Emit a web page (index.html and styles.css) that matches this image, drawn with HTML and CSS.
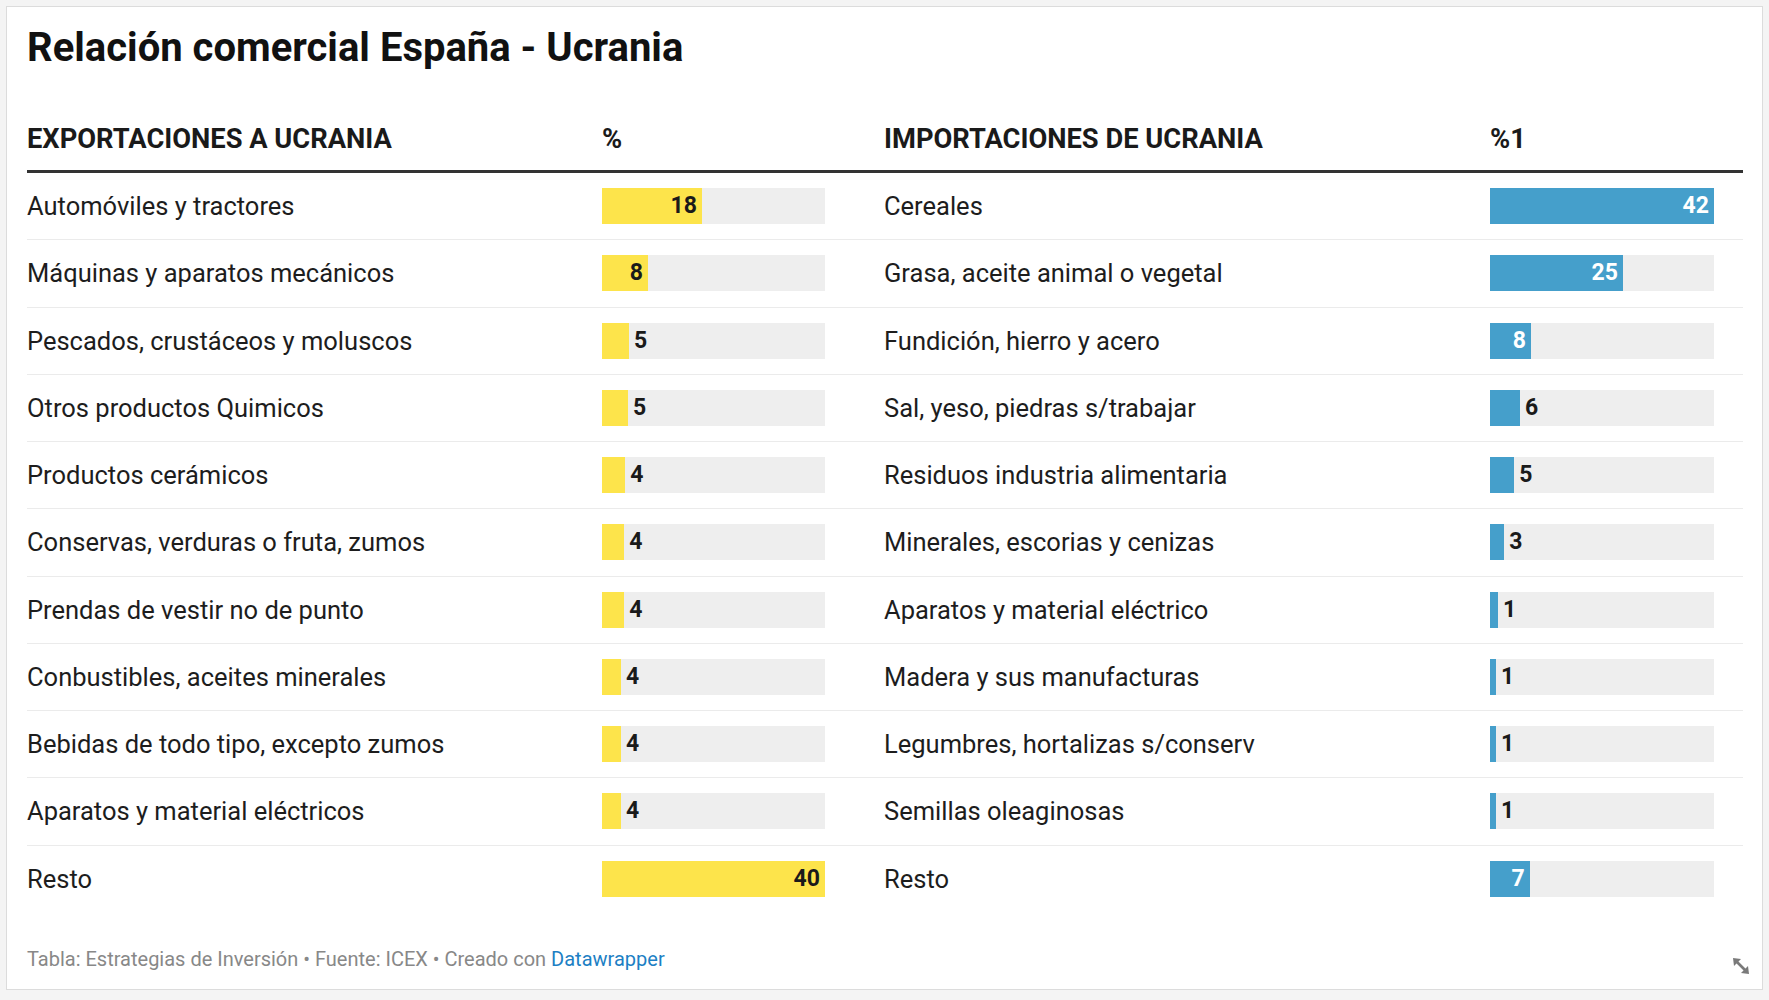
FILE: index.html
```html
<!DOCTYPE html>
<html lang="es">
<head>
<meta charset="utf-8">
<title>Relación comercial España - Ucrania</title>
<link rel="stylesheet" href="styles.css">
</head>
<body>
<div class="card">
  <h1 class="title">Relación comercial España - Ucrania</h1>
  <div class="table">
    <div class="th">EXPORTACIONES A UCRANIA</div>
    <div class="th">%</div>
    <div class="th">IMPORTACIONES DE UCRANIA</div>
    <div class="th">%1</div>

    <div class="td label">Automóviles y tractores</div>
    <div class="td bar"><div class="track"><div class="fill y in" style="width:100px"><span class="val">18</span></div></div></div>
    <div class="td label">Cereales</div>
    <div class="td bar"><div class="track r"><div class="fill b in" style="width:224px"><span class="val w">42</span></div></div></div>

    <div class="td label">Máquinas y aparatos mecánicos</div>
    <div class="td bar"><div class="track"><div class="fill y in" style="width:46px"><span class="val">8</span></div></div></div>
    <div class="td label">Grasa, aceite animal o vegetal</div>
    <div class="td bar"><div class="track r"><div class="fill b in" style="width:133px"><span class="val w">25</span></div></div></div>

    <div class="td label">Pescados, crustáceos y moluscos</div>
    <div class="td bar"><div class="track"><div class="fill y" style="width:27px"></div><span class="val out">5</span></div></div>
    <div class="td label">Fundición, hierro y acero</div>
    <div class="td bar"><div class="track r"><div class="fill b in" style="width:41px"><span class="val w">8</span></div></div></div>

    <div class="td label">Otros productos Quimicos</div>
    <div class="td bar"><div class="track"><div class="fill y" style="width:26px"></div><span class="val out">5</span></div></div>
    <div class="td label">Sal, yeso, piedras s/trabajar</div>
    <div class="td bar"><div class="track r"><div class="fill b" style="width:30px"></div><span class="val out">6</span></div></div>

    <div class="td label">Productos cerámicos</div>
    <div class="td bar"><div class="track"><div class="fill y" style="width:23.3px"></div><span class="val out">4</span></div></div>
    <div class="td label">Residuos industria alimentaria</div>
    <div class="td bar"><div class="track r"><div class="fill b" style="width:24.3px"></div><span class="val out">5</span></div></div>

    <div class="td label">Conservas, verduras o fruta, zumos</div>
    <div class="td bar"><div class="track"><div class="fill y" style="width:22.3px"></div><span class="val out">4</span></div></div>
    <div class="td label">Minerales, escorias y cenizas</div>
    <div class="td bar"><div class="track r"><div class="fill b" style="width:14.3px"></div><span class="val out">3</span></div></div>

    <div class="td label">Prendas de vestir no de punto</div>
    <div class="td bar"><div class="track"><div class="fill y" style="width:22.3px"></div><span class="val out">4</span></div></div>
    <div class="td label">Aparatos y material eléctrico</div>
    <div class="td bar"><div class="track r"><div class="fill b" style="width:8px"></div><span class="val out">1</span></div></div>

    <div class="td label">Conbustibles, aceites minerales</div>
    <div class="td bar"><div class="track"><div class="fill y" style="width:19px"></div><span class="val out">4</span></div></div>
    <div class="td label">Madera y sus manufacturas</div>
    <div class="td bar"><div class="track r"><div class="fill b" style="width:6px"></div><span class="val out">1</span></div></div>

    <div class="td label">Bebidas de todo tipo, excepto zumos</div>
    <div class="td bar"><div class="track"><div class="fill y" style="width:19px"></div><span class="val out">4</span></div></div>
    <div class="td label">Legumbres, hortalizas s/conserv</div>
    <div class="td bar"><div class="track r"><div class="fill b" style="width:6px"></div><span class="val out">1</span></div></div>

    <div class="td label">Aparatos y material eléctricos</div>
    <div class="td bar"><div class="track"><div class="fill y" style="width:19px"></div><span class="val out">4</span></div></div>
    <div class="td label">Semillas oleaginosas</div>
    <div class="td bar"><div class="track r"><div class="fill b" style="width:6px"></div><span class="val out">1</span></div></div>

    <div class="td label last">Resto</div>
    <div class="td bar last"><div class="track"><div class="fill y in" style="width:223px"><span class="val">40</span></div></div></div>
    <div class="td label last">Resto</div>
    <div class="td bar last"><div class="track r"><div class="fill b in" style="width:39.6px"><span class="val w">7</span></div></div></div>
  </div>
  <div class="footer">Tabla: Estrategias de Inversión • Fuente: ICEX • Creado con <span class="link">Datawrapper</span></div>
  <svg class="resize" width="18" height="18" viewBox="0 0 18 18" aria-hidden="true">
    <line x1="4" y1="4" x2="14" y2="14" stroke="#7a7a7a" stroke-width="2.6"/>
    <polygon points="1,1 9,2 2,9" fill="#7a7a7a"/>
    <polygon points="17,17 9,16 16,9" fill="#7a7a7a"/>
  </svg>
</div>
</body>
</html>
```

FILE: styles.css
```css
html, body {
  margin: 0;
  padding: 0;
}
body {
  background: #f4f4f4;
  font-family: Roboto, "Liberation Sans", Arial, sans-serif;
  color: #1d1d1d;
}
.card {
  position: relative;
  box-sizing: border-box;
  margin: 6px 0 0 6px;
  width: 1757px;
  height: 984px;
  background: #fff;
  border: 1px solid #dcdcdc;
  padding: 19px 19px 0 20px;
}
.title {
  margin: 0;
  font-size: 40px;
  line-height: 43px;
  font-weight: 700;
  color: #111;
}
.table {
  display: grid;
  grid-template-columns: 575px 282px 606px 253px;
  margin-top: 55px;
}
.th {
  font-size: 27.3px;
  line-height: 30px;
  font-weight: 700;
  color: #1a1a1a;
  padding-bottom: 16px;
  border-bottom: 3px solid #333;
}
.td {
  box-sizing: border-box;
  height: 67.26px;
  border-bottom: 1px solid #ebebeb;
  display: flex;
  align-items: center;
}
.td.last {
  border-bottom: none;
}
.label {
  font-size: 25.5px;
  line-height: 30px;
}
.track {
  width: 223px;
  height: 36px;
  background: #eeeeee;
  display: flex;
  align-items: center;
}
.track.r {
  width: 224px;
}
.fill {
  height: 36px;
  flex: none;
  box-sizing: border-box;
  display: flex;
  align-items: center;
  justify-content: flex-end;
}
.fill.in {
  padding-right: 5px;
}
.fill.y {
  background: #fde44b;
}
.fill.b {
  background: #459fcb;
}
.val {
  font-size: 23px;
  line-height: 26px;
  font-weight: 700;
  color: #1a1a1a;
}
.val.w {
  color: #fff;
}
.val.out {
  margin-left: 5px;
}
.footer {
  margin-top: 34px;
  font-size: 20px;
  line-height: 24px;
  color: #888;
}
.link {
  color: #1d7fc4;
}
.resize {
  position: absolute;
  right: 12px;
  bottom: 14px;
}
```
